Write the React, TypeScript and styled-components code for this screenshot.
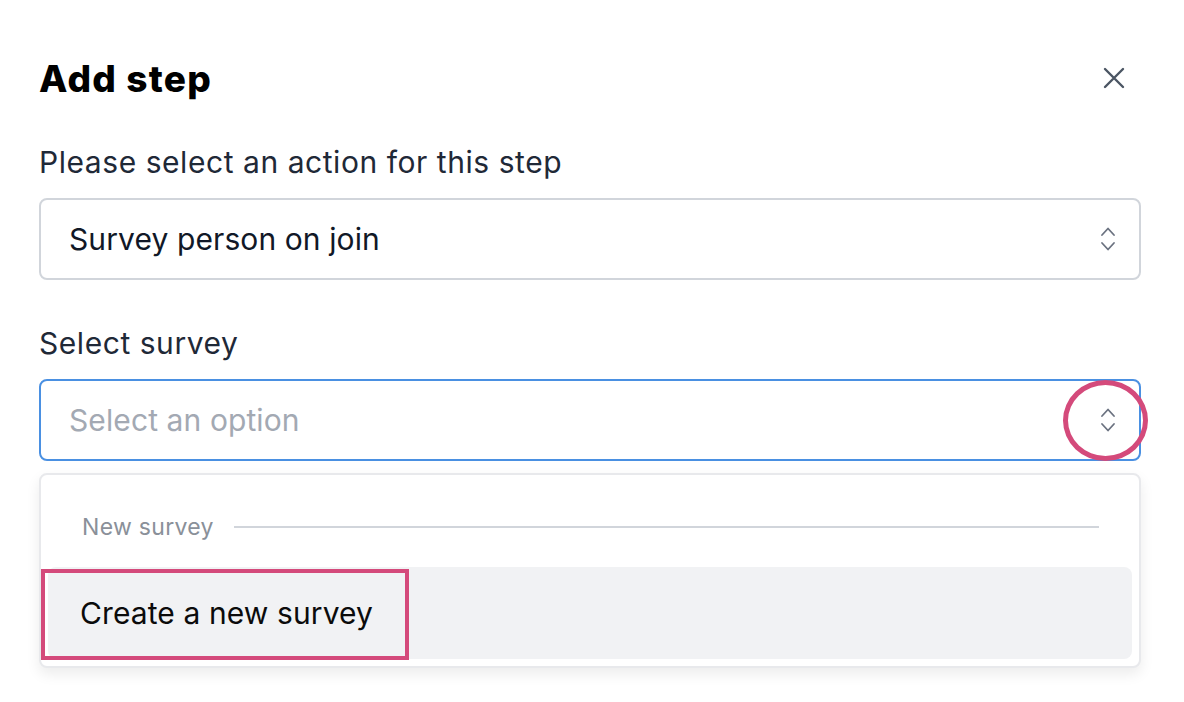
import React from "react";
import styled, { createGlobalStyle } from "styled-components";

const Global = createGlobalStyle`
  html, body { margin: 0; padding: 0; background: #fff; }
  body { font-family: Inter, "Noto Sans", sans-serif; color: #111827; -webkit-font-smoothing: antialiased; }
`;

const Dialog = styled.div`
  width: 1184px;
  height: 702px;
  box-sizing: border-box;
  padding: 52px 43px 0 39px;
  display: flex;
  flex-direction: column;
`;

const Header = styled.div`
  display: flex;
  align-items: center;
  justify-content: space-between;
  height: 52px;
`;

const Title = styled.h2`
  margin: 0;
  font-size: 37px;
  font-weight: 800;
  color: #000;
  letter-spacing: 1.2px;
`;

const CloseButton = styled.button`
  border: 0;
  background: none;
  padding: 0;
  margin-right: 15px;
  width: 24px;
  height: 24px;
  display: flex;
  align-items: center;
  justify-content: center;
  color: #4b5563;
`;

const Field = styled.div<{ $top: number }>`
  margin-top: ${(p) => p.$top}px;
  display: flex;
  flex-direction: column;
`;

const Label = styled.label`
  font-size: 30px;
  line-height: 36px;
  letter-spacing: 0.55px;
  color: #1f2937;
  margin-bottom: 18px;
`;

const SelectBox = styled.div<{ $focused?: boolean }>`
  position: relative;
  height: 82px;
  box-sizing: border-box;
  border: 2px solid ${(p) => (p.$focused ? "#4a90e2" : "#d1d5db")};
  border-radius: 8px;
  display: flex;
  align-items: center;
  padding: 0 28px;
  justify-content: space-between;
`;

const Value = styled.span<{ $placeholder?: boolean }>`
  font-size: 30px;
  letter-spacing: 0.1px;
  color: ${(p) => (p.$placeholder ? "#a3a9b3" : "#111827")};
`;

const Chevrons = styled.svg`
  width: 20px;
  height: 28px;
  margin-right: -7px;
`;

const Ring = styled.span`
  position: absolute;
  right: -9px;
  top: -1px;
  width: 75px;
  height: 71px;
  border: 5px solid #d44a7b;
  border-radius: 50%;
`;

const Menu = styled.div`
  margin-top: 12px;
  border: 2px solid #e8e9ec;
  border-radius: 8px;
  box-shadow: 0 6px 14px rgba(0, 0, 0, 0.08);
  padding: 30px 7px 7px 7px;
  background: #fff;
`;

const GroupHeader = styled.div`
  display: flex;
  align-items: center;
  gap: 20px;
  padding: 0 33px 0 34px;
  height: 44px;
  margin-bottom: 18px;
`;

const GroupLabel = styled.span`
  font-size: 23px;
  letter-spacing: 0.3px;
  color: #8a9099;
`;

const Rule = styled.div`
  flex: 1;
  height: 2px;
  background: #d1d5db;
`;

const Option = styled.div<{ $active?: boolean }>`
  position: relative;
  height: 92px;
  border-radius: 8px;
  background: ${(p) => (p.$active ? "#f1f2f4" : "transparent")};
  display: flex;
  align-items: center;
  padding-left: 32px;
  font-size: 30px;
  letter-spacing: 0.1px;
  color: #0b0b0b;
`;

const Highlight = styled.span`
  position: absolute;
  left: -7px;
  top: 2px;
  width: 360px;
  height: 83px;
  border: 4px solid #d44a7b;
`;

const ChevronIcon = () => (
  <Chevrons viewBox="0 0 20 28" fill="none" stroke="#6b7280" strokeWidth="1.8" strokeLinecap="round" strokeLinejoin="round">
    <path d="M4 10 L10 3.5 L16 10" />
    <path d="M4 18 L10 24.5 L16 18" />
  </Chevrons>
);

export default function App() {
  return (
    <>
      <Global />
      <Dialog>
        <Header>
          <Title>Add step</Title>
          <CloseButton aria-label="Close">
            <svg width="22" height="22" viewBox="0 0 22 22" stroke="#4b5563" strokeWidth="2.4" strokeLinecap="round">
              <path d="M2 2 L20 20 M20 2 L2 20" />
            </svg>
          </CloseButton>
        </Header>
        <Field $top={40}>
          <Label>Please select an action for this step</Label>
          <SelectBox>
            <Value>Survey person on join</Value>
            <ChevronIcon />
          </SelectBox>
        </Field>
        <Field $top={45}>
          <Label>Select survey</Label>
          <SelectBox $focused>
            <Value $placeholder>Select an option</Value>
            <ChevronIcon />
            <Ring />
          </SelectBox>
        </Field>
        <Menu>
          <GroupHeader>
            <GroupLabel>New survey</GroupLabel>
            <Rule />
          </GroupHeader>
          <Option $active>
            Create a new survey
            <Highlight />
          </Option>
        </Menu>
      </Dialog>
    </>
  );
}
